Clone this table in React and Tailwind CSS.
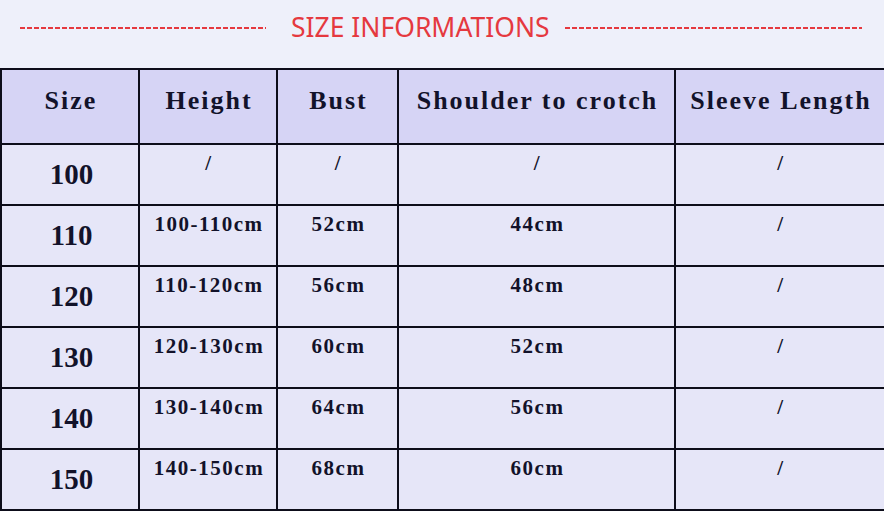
const HEADERS = ["Size", "Height", "Bust", "Shoulder to crotch", "Sleeve Length"];

const ROWS = [
  ["100", "/", "/", "/", "/"],
  ["110", "100-110cm", "52cm", "44cm", "/"],
  ["120", "110-120cm", "56cm", "48cm", "/"],
  ["130", "120-130cm", "60cm", "52cm", "/"],
  ["140", "130-140cm", "64cm", "56cm", "/"],
  ["150", "140-150cm", "68cm", "60cm", "/"],
];

const serif = { fontFamily: '"Liberation Serif", "Times New Roman", serif' };

// dashed red rule either side of the title
const Dashes = ({ width }) => (
  <svg width={width} height="4" className="block shrink-0">
    <line
      x1="0"
      y1="2"
      x2={width}
      y2="2"
      stroke="#e5393f"
      strokeWidth="1.8"
      strokeDasharray="5 2"
    />
  </svg>
);

export default function App() {
  return (
    <div className="w-[884px] h-[511px] overflow-hidden bg-[#e6e6f8] text-[#12122a]">
      {/* Title */}
      <div className="h-[68px] bg-[#eef0fa] flex items-center pl-[20px] pb-[13px]">
        <Dashes width={246} />
        <div
          className="ml-[25px] w-[257px] shrink-0 text-[26.5px] leading-none text-[#e5393f] whitespace-nowrap"
          style={{ fontFamily: '"Noto Sans", "Open Sans", sans-serif' }}
        >
          SIZE INFORMATIONS
        </div>
        <div className="ml-[17px]">
          <Dashes width={297} />
        </div>
      </div>

      {/* Table */}
      <div
        className="grid grid-cols-[138px_138px_121px_277px_1fr] border-t-2 border-l-2 border-[#0d0d1a]"
        style={serif}
      >
        {HEADERS.map((h, i) => (
          <div
            key={h}
            className={`h-[75px] bg-[#d6d4f5] border-b-2 border-[#0d0d1a] flex items-center justify-center pb-[12px] pl-[2px] text-[26px] font-bold tracking-[2px] whitespace-nowrap ${
              i < 4 ? "border-r-2" : ""
            }`}
          >
            {h}
          </div>
        ))}

        {ROWS.map((row) =>
          row.map((cell, i) => (
            <div
              key={row[0] + "-" + i}
              className={`h-[61px] border-b-2 border-[#0d0d1a] flex justify-center font-bold whitespace-nowrap ${
                i < 4 ? "border-r-2" : ""
              } ${
                i === 0
                  ? "items-center pl-[3px] text-[29px] leading-none"
                  : "items-start pt-[8px] pl-[2px] text-[21px] leading-none tracking-[1.5px]"
              }`}
            >
              {cell}
            </div>
          ))
        )}
      </div>
    </div>
  );
}
